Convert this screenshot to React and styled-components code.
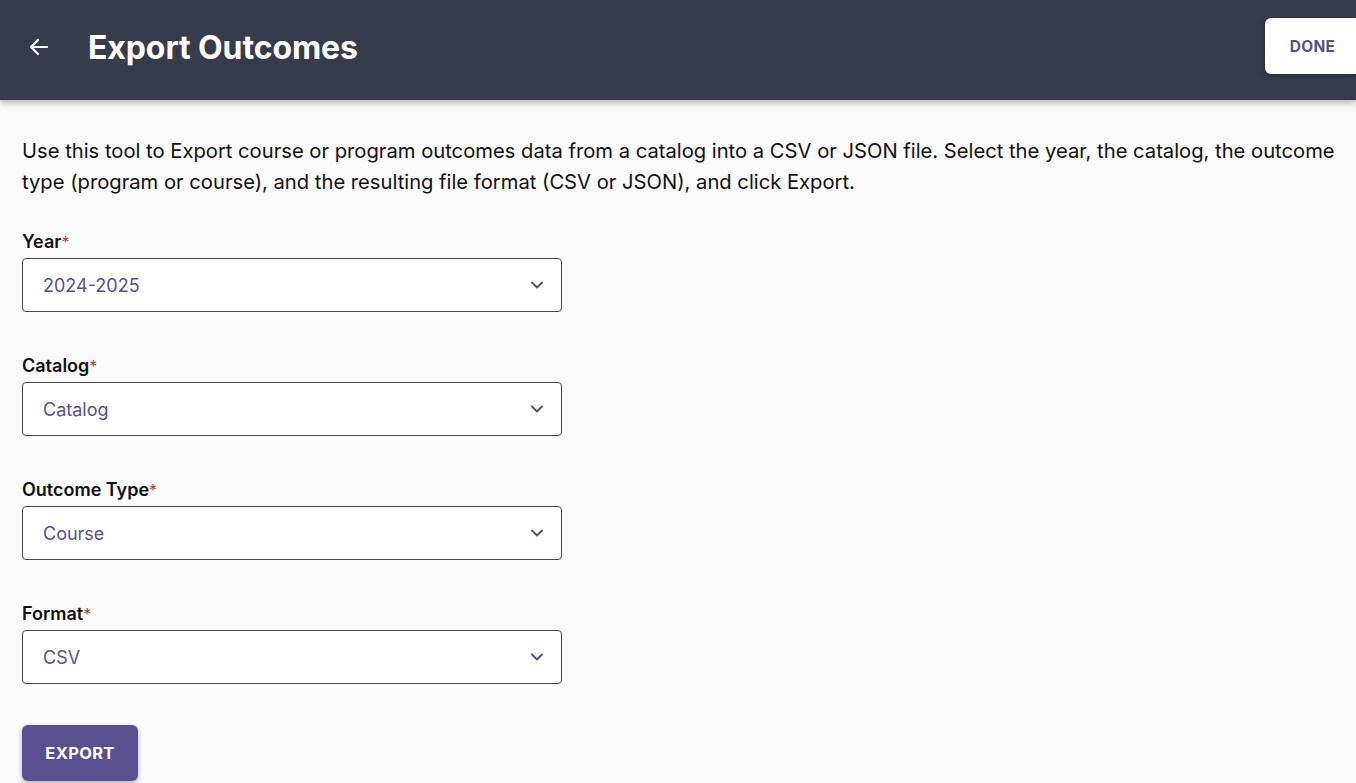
import styled, { createGlobalStyle } from 'styled-components'

const GlobalStyle = createGlobalStyle`
  html, body {
    margin: 0;
    padding: 0;
    background: #fafafa;
    font-family: Inter, "Noto Sans", sans-serif;
    color: #111;
    overflow: hidden;
  }
`

const purple = '#58508f'

const Page = styled.div`
  min-height: 783px;
  background: #fafafa;
`

const TopBar = styled.header`
  height: 100px;
  box-sizing: border-box;
  background: #373b4b;
  display: flex;
  align-items: center;
  padding: 0 0 6px 24px;
  box-shadow: 0 3px 6px rgba(0, 0, 0, 0.28);
  position: relative;
  z-index: 1;
`

const BackButton = styled.button`
  width: 30px;
  height: 30px;
  border: none;
  background: none;
  padding: 0;
  display: flex;
  align-items: center;
  justify-content: center;
  color: #fff;
  cursor: pointer;
`

const Title = styled.h1`
  margin: 0 0 0 34px;
  font-size: 32px;
  font-weight: 700;
  color: #fff;
  letter-spacing: -0.1px;
  flex: 1;
`

const DoneButton = styled.button`
  align-self: flex-start;
  margin-top: 18px;
  width: 91px;
  height: 56px;
  padding-right: 2px;
  border: none;
  border-radius: 6px 0 0 6px;
  background: #fff;
  color: ${purple};
  font-family: inherit;
  font-weight: 700;
  font-size: 15.5px;
  letter-spacing: 0.3px;
  box-shadow: 0 2px 5px rgba(0, 0, 0, 0.3);
`

const Content = styled.main`
  padding: 35px 10px 0 22px;
`

const Intro = styled.p`
  margin: 0 0 31px;
  font-size: 20.2px;
  line-height: 31px;
  color: #111;
`

const Field = styled.div`
  margin-bottom: 40px;
`

const Label = styled.label`
  display: block;
  font-size: 18px;
  font-weight: 600;
  line-height: 28px;
  margin-bottom: 2px;
  color: #111;
`

const Required = styled.span`
  color: #b83a2e;
  font-weight: 400;
  font-size: 16px;
`

const Select = styled.div`
  width: 540px;
  height: 54px;
  box-sizing: border-box;
  border: 1px solid #4a4a4a;
  border-radius: 4px;
  background: #fff;
  display: flex;
  align-items: center;
  justify-content: space-between;
  padding: 0 17px 0 20px;
  font-size: 18px;
  color: ${purple};
`

const ExportButton = styled.button`
  margin-top: 1px;
  width: 116px;
  height: 56px;
  border: none;
  border-radius: 6px;
  background: ${purple};
  color: #fff;
  font-family: inherit;
  font-weight: 700;
  font-size: 16.5px;
  letter-spacing: 0.3px;
  box-shadow: 0 2px 5px rgba(0, 0, 0, 0.3);
`

const Chevron = () => (
  <svg width="14" height="14" viewBox="0 0 14 14" fill="none">
    <path d="M2 4.5 L7 9.5 L12 4.5" stroke={purple} strokeWidth="2" strokeLinecap="round" strokeLinejoin="round" />
  </svg>
)

const ArrowLeft = () => (
  <svg width="24" height="24" viewBox="0 0 24 24" fill="none">
    <path d="M20 12 H4 M11 5 L4 12 L11 19" stroke="#fff" strokeWidth="2.2" strokeLinecap="round" strokeLinejoin="round" />
  </svg>
)

const fields = [
  { label: 'Year', value: '2024-2025' },
  { label: 'Catalog', value: 'Catalog' },
  { label: 'Outcome Type', value: 'Course' },
  { label: 'Format', value: 'CSV' },
]

export default function App() {
  return (
    <Page>
      <GlobalStyle />
      <TopBar>
        <BackButton aria-label="Back">
          <ArrowLeft />
        </BackButton>
        <Title>Export Outcomes</Title>
        <DoneButton>DONE</DoneButton>
      </TopBar>
      <Content>
        <Intro>
          Use this tool to Export course or program outcomes data from a catalog into a CSV or JSON file. Select the year, the catalog, the outcome type (program or course), and the resulting file format (CSV or JSON), and click Export.
        </Intro>
        {fields.map(f => (
          <Field key={f.label}>
            <Label>
              {f.label}
              <Required>*</Required>
            </Label>
            <Select>
              <span>{f.value}</span>
              <Chevron />
            </Select>
          </Field>
        ))}
        <ExportButton>EXPORT</ExportButton>
      </Content>
    </Page>
  )
}
